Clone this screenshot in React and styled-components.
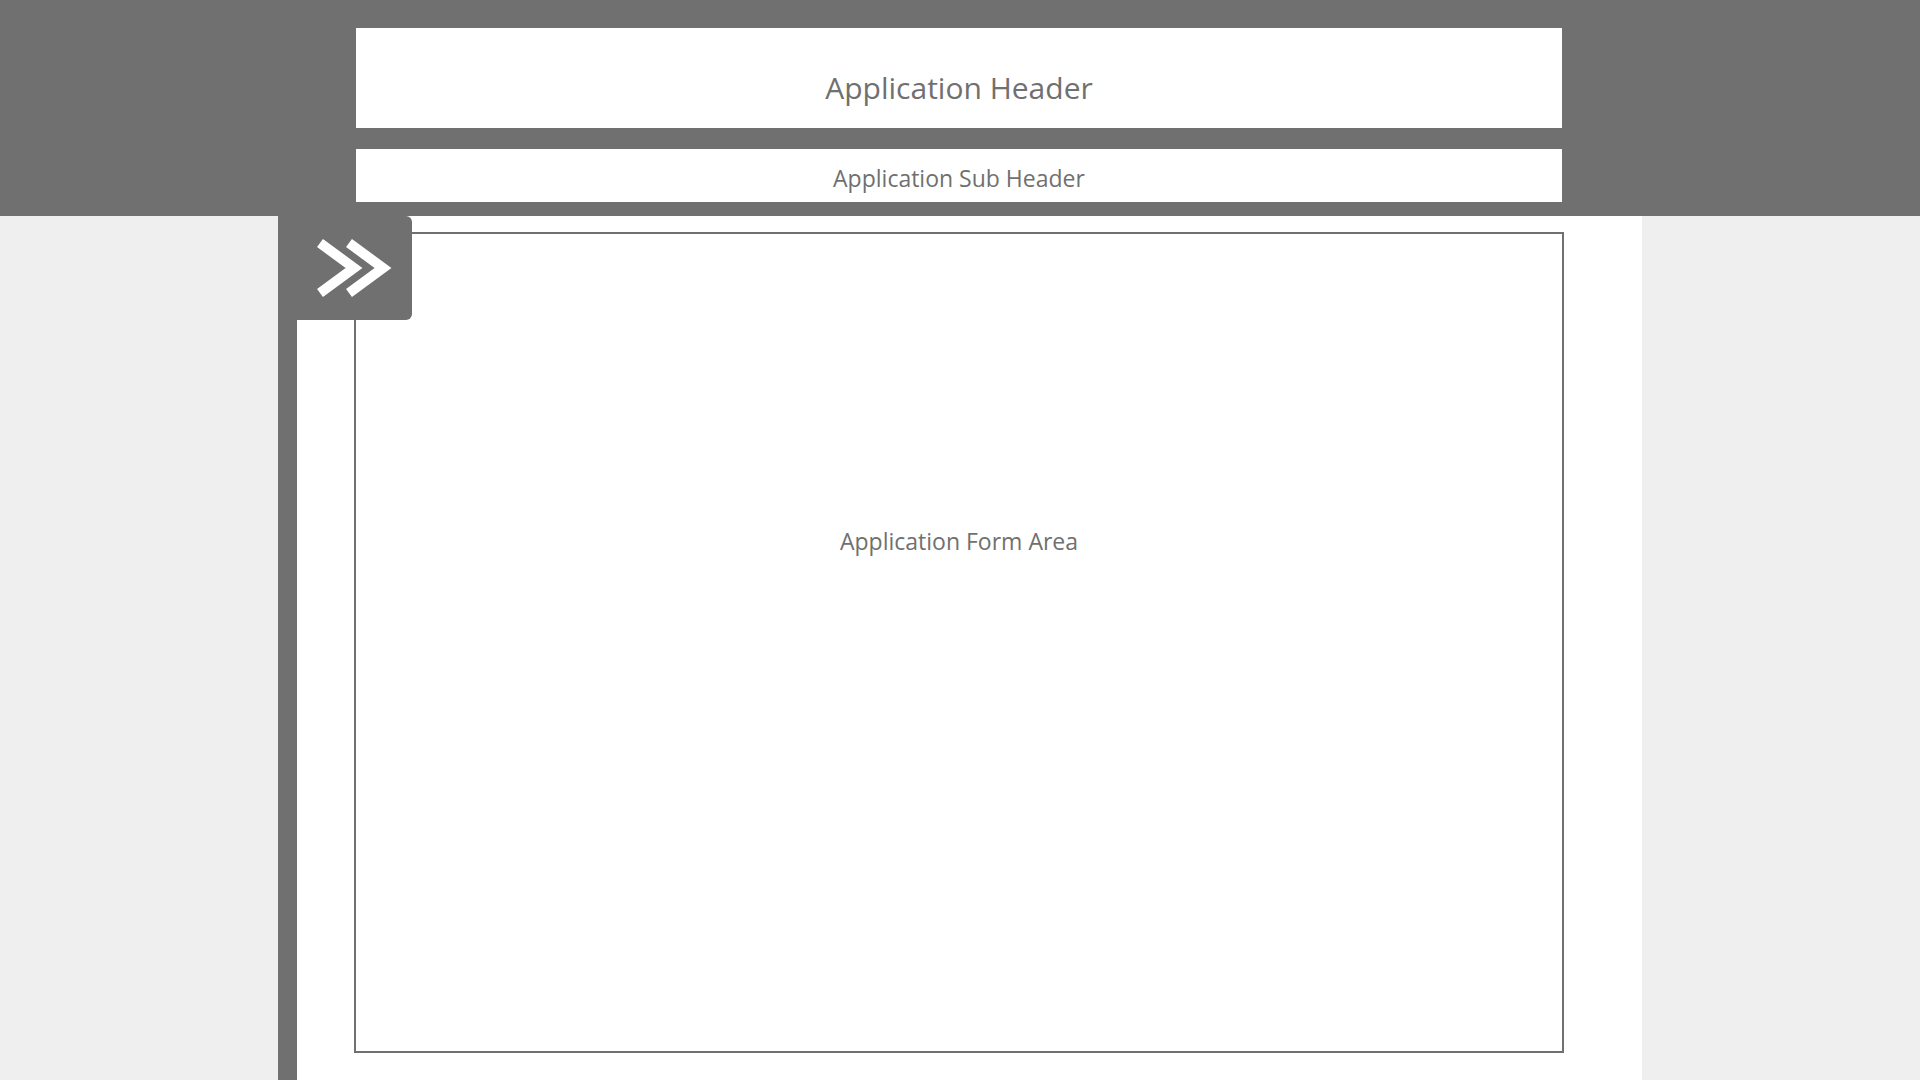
import React from "react";
import styled, { createGlobalStyle } from "styled-components";

const Global = createGlobalStyle`
  html, body { margin: 0; padding: 0; }
  body {
    background: #efefef;
    font-family: "Open Sans", "Noto Sans", sans-serif;
    color: #707070;
  }
`;

const Page = styled.div`
  min-height: 100vh;
  display: flex;
  flex-direction: column;
`;

const TopBand = styled.header`
  background: #707070;
  height: 216px;
  flex: none;
`;

const Container = styled.div`
  width: 1364px;
  margin: 0 auto;
`;

const HeaderStack = styled(Container)`
  padding: 28px 80px 0 78px;
  box-sizing: border-box;
  display: flex;
  flex-direction: column;
  gap: 21px;
`;

const HeaderBox = styled.div`
  background: #ffffff;
  height: ${(p) => p.$h}px;
  box-sizing: border-box;
  padding-top: ${(p) => p.$pt}px;
  text-align: center;
  font-size: ${(p) => p.$fs}px;
  line-height: 1;
  color: #707070;
`;

const Body = styled(Container)`
  flex: 1;
  display: flex;
  position: relative;
`;

const SideStrip = styled.div`
  width: 19px;
  background: #707070;
  flex: none;
`;

const Content = styled.main`
  flex: 1;
  background: #ffffff;
  padding: 16px 0 0 57px;
  box-sizing: border-box;
`;

const FormArea = styled.section`
  width: 1210px;
  height: 821px;
  box-sizing: border-box;
  border: 2px solid #707070;
  padding-top: 296px;
  text-align: center;
  font-size: 23px;
  line-height: 1;
  color: #707070;
`;

const ToggleButton = styled.button`
  position: absolute;
  left: 0;
  top: 0;
  width: 134px;
  height: 104px;
  border: none;
  margin: 0;
  padding: 0 0 0 34px;
  background: #707070;
  border-radius: 0 6px 6px 0;
  display: flex;
  align-items: center;
  cursor: pointer;
`;

const Chevrons = () => (
  <svg width="84" height="66" viewBox="0 0 84 66" fill="none">
    <polyline points="8,8 42,33 8,58" stroke="#ffffff" strokeWidth="10" strokeLinejoin="miter" strokeLinecap="butt" />
    <polyline points="37,8 71,33 37,58" stroke="#ffffff" strokeWidth="10" strokeLinejoin="miter" strokeLinecap="butt" />
  </svg>
);

export default function App() {
  return (
    <Page>
      <Global />
      <TopBand>
        <HeaderStack>
          <HeaderBox $h={100} $pt={45} $fs={30}>Application Header</HeaderBox>
          <HeaderBox $h={53} $pt={18} $fs={23}>Application Sub Header</HeaderBox>
        </HeaderStack>
      </TopBand>
      <Body>
        <SideStrip />
        <Content>
          <FormArea>Application Form Area</FormArea>
        </Content>
        <ToggleButton aria-label="Expand">
          <Chevrons />
        </ToggleButton>
      </Body>
    </Page>
  );
}
